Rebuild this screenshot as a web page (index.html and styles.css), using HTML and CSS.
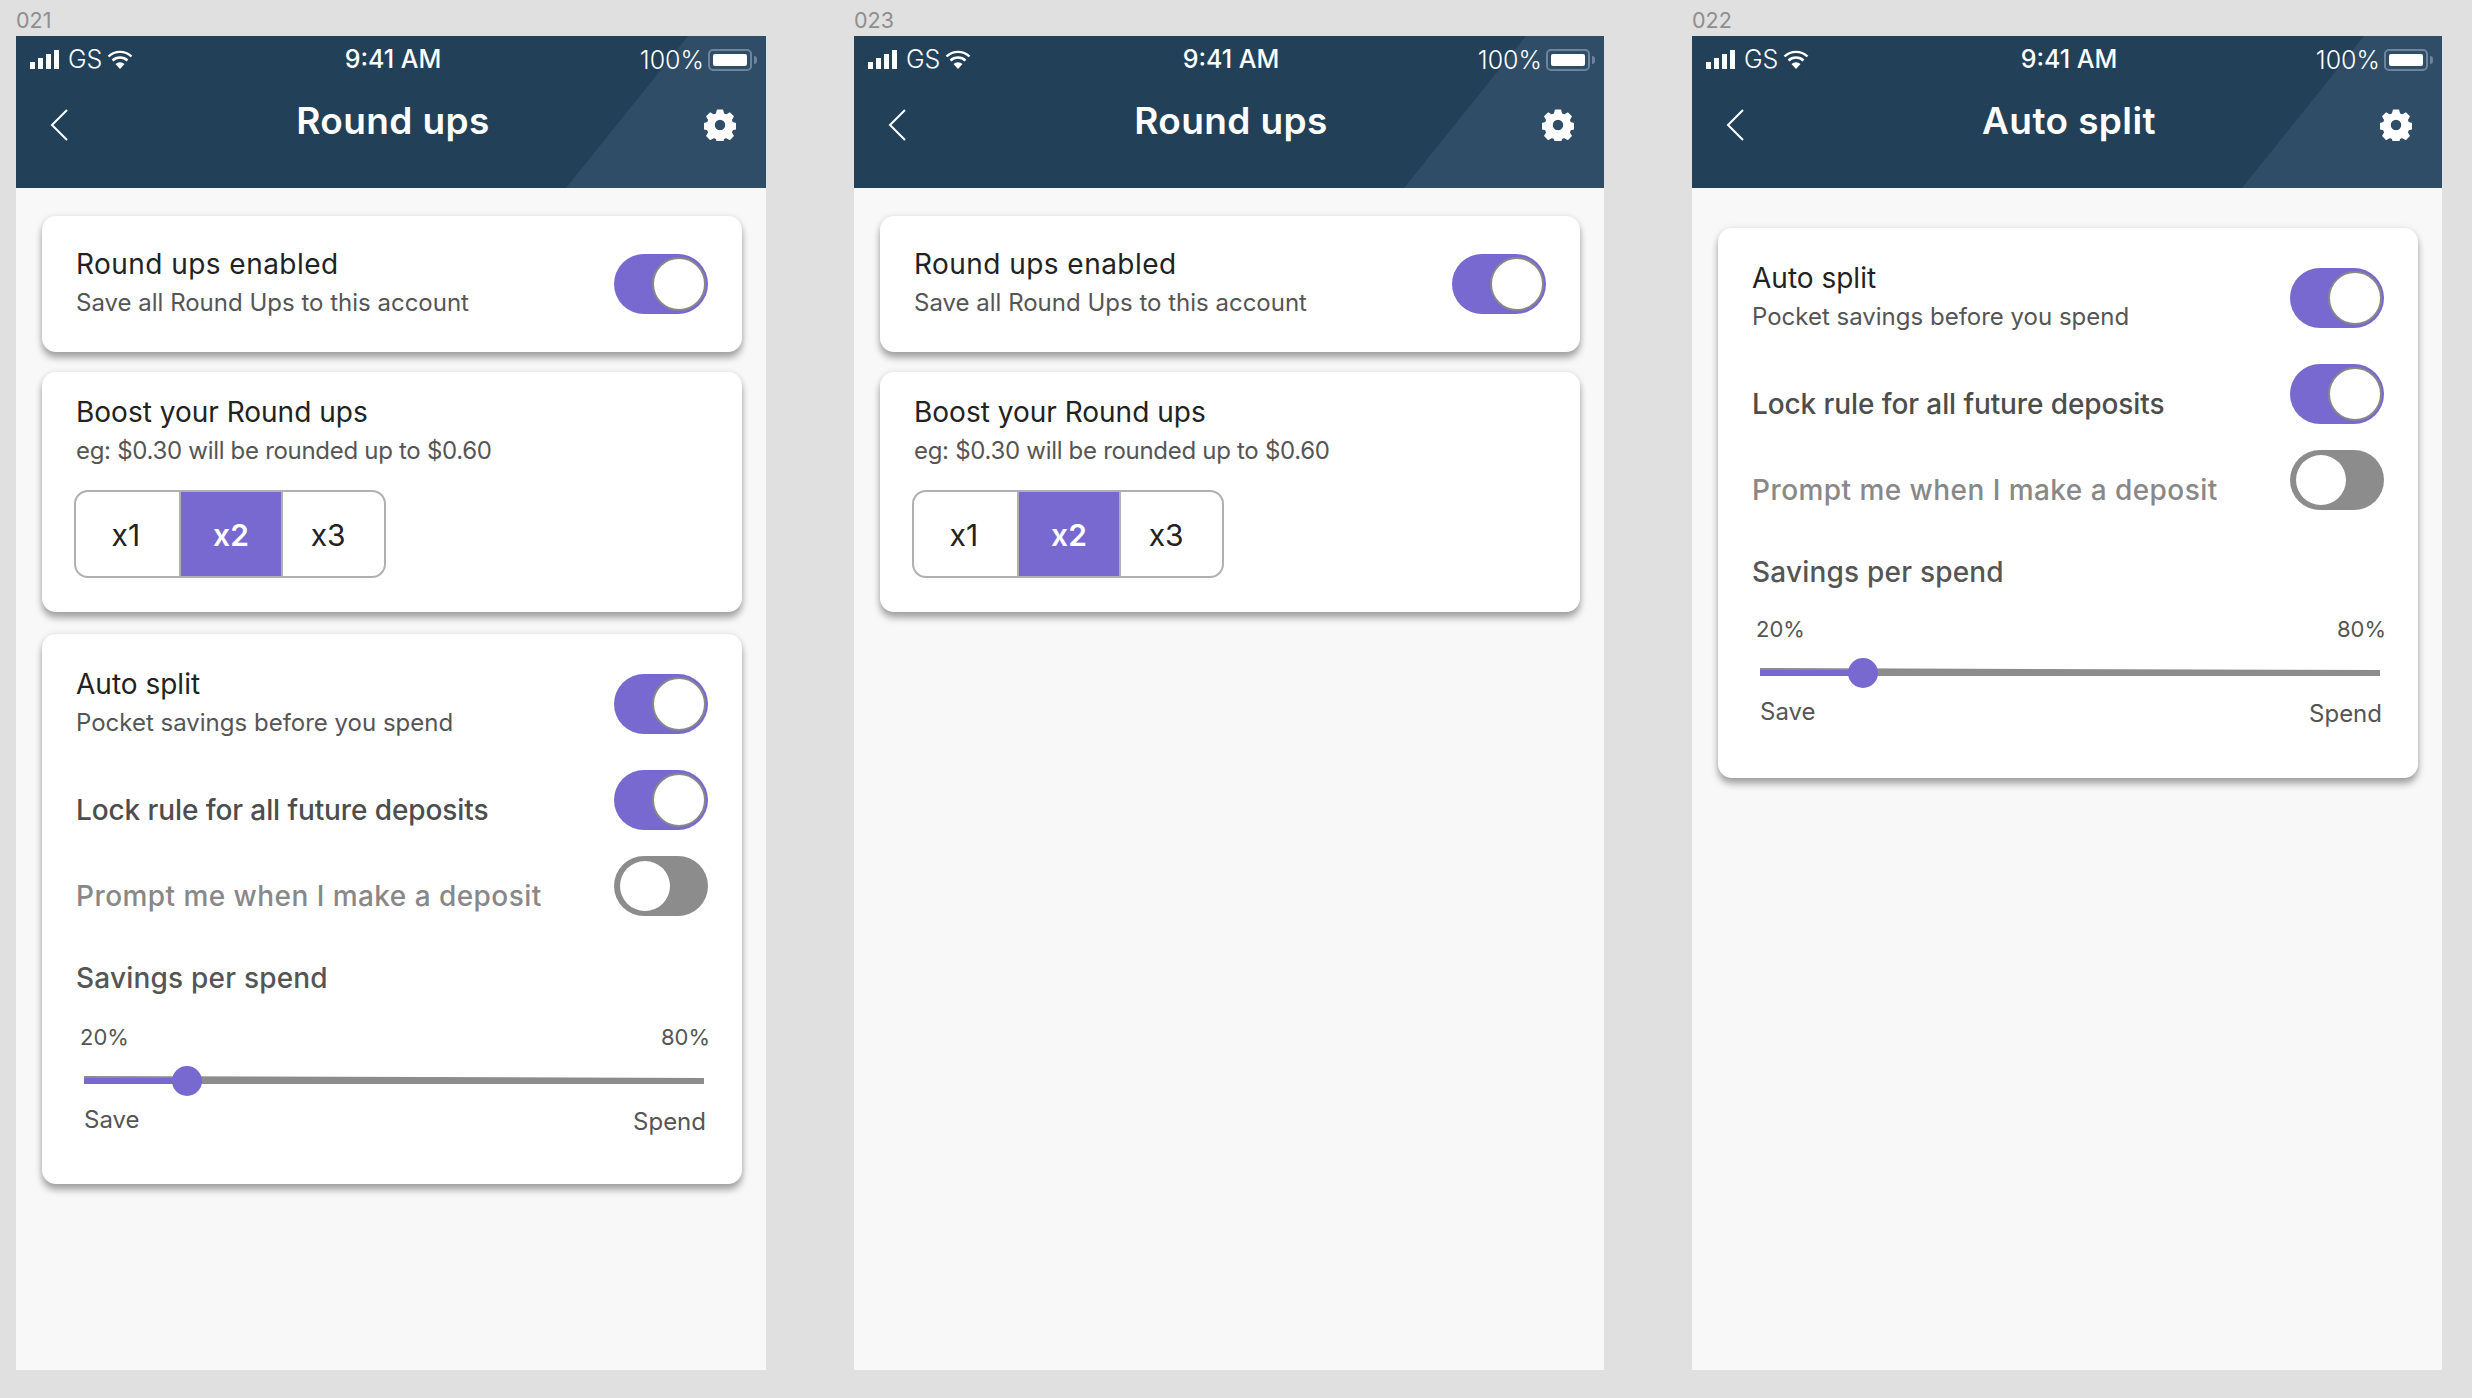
FILE: index.html
```html
<!DOCTYPE html>
<html lang="en">
<head>
<meta charset="utf-8">
<title>Round ups</title>
<link rel="stylesheet" href="styles.css">
</head>
<body>
<svg class="defs" width="0" height="0" aria-hidden="true">
  <symbol id="signal" viewBox="0 0 29 19"><rect x="0" y="12" width="5" height="7"/><rect x="8" y="8" width="5" height="11"/><rect x="16" y="4" width="5" height="15"/><rect x="24" y="0" width="5" height="19"/></symbol>
  <symbol id="wifi" viewBox="0 0 26 19"><path d="M1.5 6.5a16.5 16.5 0 0 1 23 0M5.5 10.5a11 11 0 0 1 15 0" fill="none" stroke="#fff" stroke-width="2.4"/><path d="M8.5 14a6.5 6.5 0 0 1 9 0L13 19z" fill="#fff"/></symbol>
  <symbol id="back" viewBox="0 0 18 32"><path d="M17 1 2 16l15 15" fill="none" stroke="#fff" stroke-width="2"/></symbol>
  <symbol id="gear" viewBox="0 0 32 32"><path fill="#fff" fill-rule="evenodd" d="M13.4 1h5.2l1 3.8 2.7 1.1 3.4-2 3.6 3.6-2 3.4 1.1 2.7 3.8 1v5.2l-3.8 1-1.1 2.7 2 3.4-3.6 3.6-3.4-2-2.7 1.1-1 3.8h-5.2l-1-3.8-2.7-1.1-3.4 2-3.6-3.6 2-3.4-1.1-2.7-3.8-1v-5.2l3.8-1 1.1-2.7-2-3.4 3.6-3.6 3.4 2 2.7-1.1zM16 10.2a5.8 5.8 0 1 0 0 11.6 5.8 5.8 0 0 0 0-11.6z" stroke="#fff" stroke-width="1.1" stroke-linejoin="round"/></symbol>
</svg>
<main class="board">

  <section class="artboard">
    <div class="frame-label">021</div>
    <div class="phone">
      <header class="header">
        <div class="status">
          <div class="status-left"><svg class="signal"><use href="#signal"/></svg><span>GS</span><svg class="wifi"><use href="#wifi"/></svg></div>
          <div class="status-time">9:41 AM</div>
          <div class="status-right"><span>100%</span><span class="battery"><span class="battery-fill"></span></span><span class="battery-cap"></span></div>
        </div>
        <div class="nav">
          <svg class="back"><use href="#back"/></svg>
          <h1 class="nav-title">Round ups</h1>
          <svg class="gear"><use href="#gear"/></svg>
        </div>
      </header>
      <div class="content">
        <div class="card card-enabled">
          <div class="row">
            <div><div class="title title-wide">Round ups enabled</div><div class="sub">Save all Round Ups to this account</div></div>
            <div class="toggle on toggle-offset"><span class="knob"></span></div>
          </div>
        </div>
        <div class="card card-boost">
          <div class="title">Boost your Round ups</div>
          <div class="sub sub-tight">eg: $0.30 will be rounded up to $0.60</div>
          <div class="segments"><div class="segment">x1</div><div class="segment active">x2</div><div class="segment">x3</div></div>
        </div>
        <div class="card card-split">
          <div class="row">
            <div><div class="title">Auto split</div><div class="sub">Pocket savings before you spend</div></div>
            <div class="toggle on toggle-offset"><span class="knob"></span></div>
          </div>
          <div class="row row-lock">
            <div class="label label-lock">Lock rule for all future deposits</div>
            <div class="toggle on"><span class="knob"></span></div>
          </div>
          <div class="row row-prompt">
            <div class="label label-prompt">Prompt me when I make a deposit</div>
            <div class="toggle off"><span class="knob"></span></div>
          </div>
          <div class="label label-savings">Savings per spend</div>
          <div class="range-top"><span>20%</span><span>80%</span></div>
          <div class="slider"><div class="track"></div><div class="fill"></div><div class="handle"></div></div>
          <div class="range-bottom"><span>Save</span><span class="spend">Spend</span></div>
        </div>
      </div>
    </div>
  </section>

  <section class="artboard">
    <div class="frame-label">023</div>
    <div class="phone">
      <header class="header">
        <div class="status">
          <div class="status-left"><svg class="signal"><use href="#signal"/></svg><span>GS</span><svg class="wifi"><use href="#wifi"/></svg></div>
          <div class="status-time">9:41 AM</div>
          <div class="status-right"><span>100%</span><span class="battery"><span class="battery-fill"></span></span><span class="battery-cap"></span></div>
        </div>
        <div class="nav">
          <svg class="back"><use href="#back"/></svg>
          <h1 class="nav-title">Round ups</h1>
          <svg class="gear"><use href="#gear"/></svg>
        </div>
      </header>
      <div class="content">
        <div class="card card-enabled">
          <div class="row">
            <div><div class="title title-wide">Round ups enabled</div><div class="sub">Save all Round Ups to this account</div></div>
            <div class="toggle on toggle-offset"><span class="knob"></span></div>
          </div>
        </div>
        <div class="card card-boost">
          <div class="title">Boost your Round ups</div>
          <div class="sub sub-tight">eg: $0.30 will be rounded up to $0.60</div>
          <div class="segments"><div class="segment">x1</div><div class="segment active">x2</div><div class="segment">x3</div></div>
        </div>
      </div>
    </div>
  </section>

  <section class="artboard">
    <div class="frame-label">022</div>
    <div class="phone">
      <header class="header">
        <div class="status">
          <div class="status-left"><svg class="signal"><use href="#signal"/></svg><span>GS</span><svg class="wifi"><use href="#wifi"/></svg></div>
          <div class="status-time">9:41 AM</div>
          <div class="status-right"><span>100%</span><span class="battery"><span class="battery-fill"></span></span><span class="battery-cap"></span></div>
        </div>
        <div class="nav">
          <svg class="back"><use href="#back"/></svg>
          <h1 class="nav-title">Auto split</h1>
          <svg class="gear"><use href="#gear"/></svg>
        </div>
      </header>
      <div class="content content-split">
        <div class="card card-split">
          <div class="row">
            <div><div class="title">Auto split</div><div class="sub">Pocket savings before you spend</div></div>
            <div class="toggle on toggle-offset"><span class="knob"></span></div>
          </div>
          <div class="row row-lock">
            <div class="label label-lock">Lock rule for all future deposits</div>
            <div class="toggle on"><span class="knob"></span></div>
          </div>
          <div class="row row-prompt">
            <div class="label label-prompt">Prompt me when I make a deposit</div>
            <div class="toggle off"><span class="knob"></span></div>
          </div>
          <div class="label label-savings">Savings per spend</div>
          <div class="range-top"><span>20%</span><span>80%</span></div>
          <div class="slider"><div class="track"></div><div class="fill"></div><div class="handle"></div></div>
          <div class="range-bottom"><span>Save</span><span class="spend">Spend</span></div>
        </div>
      </div>
    </div>
  </section>

</main>
</body>
</html>
```
FILE: styles.css
```css
* { box-sizing: border-box; }
html, body { margin: 0; height: 100%; }
body { background: #e0e0e0; font-family: Inter, "Noto Sans", sans-serif; overflow: hidden; }
.defs { position: absolute; }
.board { display: flex; gap: 88px; padding: 8px 0 0 16px; }
.artboard { width: 750px; }
.frame-label { height: 28px; font-size: 21.5px; line-height: 24px; color: #8e8e8e; }
.phone { height: 1334px; background: #f8f8f8; }

.header { position: relative; height: 152px; background: #224159; color: #fff; overflow: hidden; }
.header::after { content: ""; position: absolute; inset: 0; background: #2f4d66; clip-path: polygon(672px 0, 750px 0, 750px 152px, 550px 152px); }
.status, .nav { position: relative; z-index: 1; }
.status { display: grid; grid-template-columns: 1fr auto 1fr; align-items: center; height: 34px; margin-top: 6px; padding: 0 14px; font-size: 25px; }
.status-left { display: flex; align-items: center; font-weight: 300; }
.signal { width: 29px; height: 19px; fill: #fff; margin-right: 9px; }
.wifi { width: 26px; height: 19px; margin-left: 5px; }
.status-time { padding-left: 4px; font-weight: 500; }
.status-right { display: flex; align-items: center; justify-content: flex-end; font-weight: 300; margin-right: -5px; padding-top: 2px; }
.battery { display: flex; width: 44px; height: 22px; margin-left: 4px; padding: 3px; border: 2px solid #6e849a; border-radius: 5px; }
.battery-fill { flex: 1; background: #fff; border-radius: 2px; }
.battery-cap { width: 3px; height: 8px; margin-left: 2px; background: #6e849a; border-radius: 0 3px 3px 0; }
.nav { display: grid; grid-template-columns: 1fr auto 1fr; align-items: center; height: 48px; margin-top: 21px; padding: 0 30px 0 34px; }
.back { width: 18px; height: 32px; }
.nav-title { margin: 0; padding-bottom: 8px; font-size: 37px; line-height: 48px; font-weight: 600; letter-spacing: .4px; }
.gear { width: 32px; height: 32px; justify-self: end; }

.content { display: flex; flex-direction: column; padding: 28px 24px 0 26px; }
.content-split { padding-top: 40px; }
.card { background: #fff; border-radius: 14px; padding: 0 34px; box-shadow: 0 6px 7px rgba(0, 0, 0, .32), 0 0 6px rgba(0, 0, 0, .1); }
.card-enabled { padding-top: 28px; padding-bottom: 30px; }
.card-boost { margin-top: 20px; padding-top: 20px; padding-bottom: 34px; }
.content > .card-split { padding-top: 30px; padding-bottom: 49px; }
.card-boost + .card-split { margin-top: 22px; }

.row { display: flex; justify-content: space-between; align-items: flex-start; }
.title { font-size: 28px; line-height: 40px; color: #222; }
.title-wide { letter-spacing: .45px; }
.sub { font-size: 24px; line-height: 38px; color: #555; }
.sub-tight { letter-spacing: -.3px; }
.label { font-size: 28px; line-height: 40px; font-weight: 500; }
.toggle-offset { margin-top: 10px; }
.row-lock { margin-top: 28px; }
.row-prompt { margin-top: 26px; }
.label-lock { margin-top: 20px; color: #4d4d4d; letter-spacing: -.1px; }
.label-prompt { margin-top: 20px; color: #888; letter-spacing: .45px; }
.label-savings { margin-top: 42px; color: #555; letter-spacing: .2px; }

.toggle { display: flex; align-items: center; width: 94px; height: 60px; border-radius: 30px; }
.toggle.on { justify-content: flex-end; background: #7769cf; padding-right: 2px; }
.toggle.off { background: #8c8c8c; padding-left: 6px; }
.knob { display: block; border-radius: 50%; background: #fff; }
.on .knob { width: 54px; height: 54px; border: 2px solid #888; }
.off .knob { width: 50px; height: 50px; }

.segments { display: grid; grid-template-columns: repeat(3, 1fr); width: 312px; height: 88px; margin-top: 20px; margin-left: -2px; border: 2px solid #b0b0b0; border-radius: 14px; overflow: hidden; }
.segment { display: flex; align-items: center; justify-content: center; padding-top: 2px; font-size: 30px; color: #222; }
.segment:first-child { padding-right: 3px; }
.segment:last-child { padding-right: 11px; }
.segment + .segment { border-left: 2px solid #b0b0b0; }
.segment.active { background: #7769cf; color: #fff; font-weight: 600; }

.range-top, .range-bottom { display: flex; justify-content: space-between; line-height: 30px; color: #555; }
.range-top { margin-top: 24px; margin-right: -2px; padding-left: 4px; font-size: 22px; }
.slider { position: relative; height: 30px; margin: 14px 4px 0 8px; }
.track { position: absolute; left: 0; right: 0; top: 10px; height: 8px; background: #8c8c8c; clip-path: polygon(0 0, 100% 2px, 100% 100%, 0 100%); }
.fill { position: absolute; left: 0; top: 12px; width: 104px; height: 6px; background: #7769cf; }
.handle { position: absolute; left: 88px; top: 0; width: 30px; height: 30px; border-radius: 50%; background: #7769cf; }
.range-bottom { margin-top: 9px; padding: 0 2px 0 8px; height: 30px; font-size: 24px; }
.spend { padding-top: 2px; }
.content-split .range-top { margin-top: 22px; }
.content-split > .card-split { padding-bottom: 51px; }
```
